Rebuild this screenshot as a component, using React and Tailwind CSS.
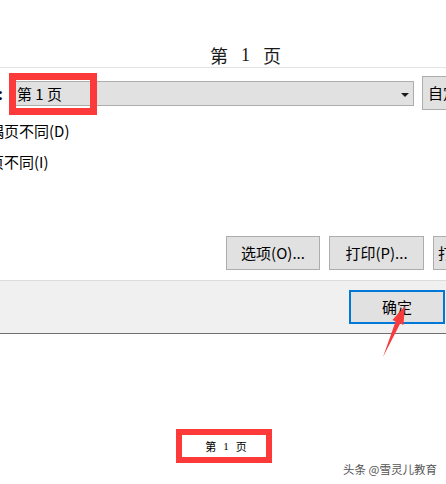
import React from "react";

const cjk = { fontFamily: '"Noto Sans CJK SC", "Noto Sans", sans-serif' };
const serif = { fontFamily: '"Liberation Serif", "Noto Sans CJK SC", serif' };

const DialogButton = ({ label, w = "w-[94px]", align = "justify-center" }) => (
  <div
    className={`${w} h-[34px] shrink-0 flex items-center ${align} bg-[#e1e1e1] border border-[#adadad] text-[15px] text-black whitespace-nowrap`}
  >
    {label}
  </div>
);

const App = () => {
  return (
    <div
      className="relative w-[446px] h-[484px] bg-white overflow-hidden"
      style={cjk}
    >
      {/* page header preview */}
      <div className="h-[67px] flex items-end pl-[210px] pb-[1px]">
        <div className="flex items-center gap-[13px] text-[18px] text-[#1a1a1a] leading-[22px]" style={serif}>
          <span style={cjk}>第</span>
          <span>1</span>
          <span style={cjk}>页</span>
        </div>
      </div>
      <div className="h-px bg-[#e3e3e3]" />

      {/* header select row */}
      <div className="relative mt-[8px] h-[34px] flex items-center">
        <span className="w-[15px] shrink-0 text-[15px] leading-none font-bold text-black -ml-[2px] pl-0">:</span>
        <div className="relative ml-[2px] w-[399px] h-[25px] shrink-0 bg-[#e1e1e1] border border-[#adadad] flex items-center pl-[1px]">
          <span className="text-[15px] leading-none text-black">第 1 页</span>
          <span className="absolute right-[4px] top-[11px] w-0 h-0 border-l-[4px] border-r-[4px] border-t-[4px] border-l-transparent border-r-transparent border-t-[#1a1a1a]" />
        </div>
        <div className="ml-[8px] h-[34px] w-[60px] shrink-0 bg-[#e1e1e1] border border-[#adadad] flex items-center pl-[5px] text-[15px] text-black whitespace-nowrap">
          自定义
        </div>
      </div>

      {/* checkbox options */}
      <div className="mt-[11px] h-[20px] flex items-center -ml-[11px] text-[15px] text-black">偶页不同(D)</div>
      <div className="mt-[11px] h-[20px] flex items-center -ml-[11px] text-[15px] text-black">页不同(I)</div>

      {/* action buttons */}
      <div className="mt-[64px] flex gap-[9px] pl-[226px]">
        <DialogButton label="选项(O)..." />
        <DialogButton label="打印(P)..." w="w-[95px]" />
        <DialogButton label="打印预览(V)" w="w-[110px]" align="justify-start pl-[4px]" />
      </div>

      {/* footer */}
      <div className="mt-[10px] h-[54px] bg-[#f0f0f0] border-t border-t-[#dcdcdc] border-b border-b-[#707070] flex justify-end pt-[9px] pr-px">
        <div className="w-[96px] h-[34px] bg-[#e1e1e1] border-2 border-[#0078d7] flex items-center justify-center text-[15px] text-black">
          确定
        </div>
      </div>

      {/* footer preview */}
      <div className="mt-[95px] ml-[176px] w-[96px] h-[34px] border-[6px] border-[#fd3a3a] flex items-center justify-center">
        <div className="flex items-center gap-[7px] text-[11px] leading-none text-black pl-[4px]" style={serif}>
          <span style={cjk}>第</span>
          <span>1</span>
          <span style={cjk}>页</span>
        </div>
      </div>

      {/* annotation: red box around select text */}
      <div className="absolute left-[9px] top-[73px] w-[88px] h-[42px] border-[7px] border-[#fd3a3a]" />

      {/* annotation: arrow */}
      <svg className="absolute left-0 top-0 pointer-events-none" width="446" height="484">
        <polygon
          points="405,306 392.4,320.1 395.6,321.5 383,357 400.2,323.5 403.4,324.9"
          fill="#f53b3b"
        />
      </svg>

      {/* watermark */}
      <div
        className="absolute left-[343px] top-[462px] text-[11.5px] leading-[14px] text-[#555] whitespace-nowrap"
        style={{ textShadow: "0 0 2px #fff, 0 0 2px #fff" }}
      >
        头条 @雪灵儿教育
      </div>
    </div>
  );
};

export default App;
